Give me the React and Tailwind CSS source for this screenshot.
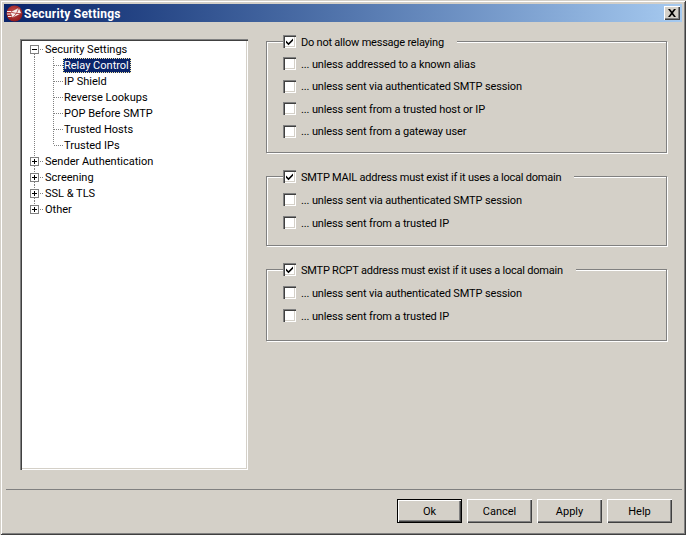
import React from 'react';

const FONT = "font-['Roboto',Arial,sans-serif] text-[11px] leading-[16px]";

const AppIcon = () => (
  <svg width="17" height="17" viewBox="0 0 17 17" className="shrink-0">
    <defs>
      <radialGradient id="red" cx="0.45" cy="0.4" r="0.65">
        <stop offset="0" stopColor="#c9504f" />
        <stop offset="1" stopColor="#8c1517" />
      </radialGradient>
    </defs>
    <circle cx="8.5" cy="8.5" r="8" fill="url(#red)" />
    <path d="M4 7l9-4.500 2.500 6-9 4.500z" fill="#f8eeec" stroke="#8c1517" strokeWidth="0.5" />
    <path d="M4 7l6.500 1.500L13 2.500M6.500 13l4-4.500 5 0" fill="none" stroke="#a62a2a" strokeWidth="0.8" />
    <path d="M1 6.500h4M1 9h3.500M2 11.500h3.500" stroke="#f8eeec" strokeWidth="1" />
  </svg>
);

const CloseButton = () => (
  <button className="flex h-[14px] w-[16px] items-center justify-center bg-[#d4d0c8] shadow-[inset_1px_1px_0_#fff,inset_-1px_-1px_0_#404040,inset_-2px_-2px_0_#808080]">
    <svg width="10" height="8" viewBox="0 0 10 8">
      <path d="M1 0h2l2 2.5L7 0h2L6 4l3 4H7L5 5.5 3 8H1l3-4z" fill="#000" />
    </svg>
  </button>
);

const Dots = ({ x1, y1, x2, y2 }) => (
  <line x1={x1} y1={y1} x2={x2} y2={y2} stroke="#808080" strokeDasharray="1 1" shapeRendering="crispEdges" />
);

// expander plus the dotted guide going through it
const TopGlyph = ({ open, first, last }) => (
  <svg width="23" height="16" className="shrink-0">
    {!first && <Dots x1={12.5} y1={0} x2={12.5} y2={4} />}
    {!last && <Dots x1={12.5} y1={13} x2={12.5} y2={16} />}
    <Dots x1={18} y1={8.5} x2={22} y2={8.5} />
    <rect x="8.5" y="4.5" width="8" height="8" fill="#fff" stroke="#808080" shapeRendering="crispEdges" />
    <path d={open ? 'M10 8.5h5' : 'M10 8.5h5M12.5 6v5'} stroke="#000" shapeRendering="crispEdges" />
  </svg>
);

const ChildGlyph = ({ last }) => (
  <svg width="41" height="16" className="shrink-0">
    <Dots x1={12.5} y1={0} x2={12.5} y2={16} />
    <Dots x1={31.5} y1={0} x2={31.5} y2={last ? 8 : 16} />
    <Dots x1={32} y1={8.5} x2={41} y2={8.5} />
  </svg>
);

const TopRow = ({ label, open, first, last }) => (
  <div className="flex h-4 items-center">
    <TopGlyph open={open} first={first} last={last} />
    <span className="pt-px">{label}</span>
  </div>
);

const ChildRow = ({ label, selected, last }) => (
  <div className="flex h-4 items-center">
    <ChildGlyph last={last} />
    <span
      className={
        selected
          ? 'flex h-[15px] items-center border border-dotted border-[#f5e9a8] bg-[#0a246a] pr-[1px] pt-px text-white'
          : 'pl-[1px] pt-px'
      }
    >
      {label}
    </span>
  </div>
);

const Tree = () => (
  <div className="h-[431px] w-[228px] shrink-0 bg-white pt-[2px] shadow-[inset_1px_1px_0_#808080,inset_2px_2px_0_#404040,inset_-1px_-1px_0_#fff,inset_-2px_-2px_0_#d4d0c8]">
    <div className="pl-[2px]">
      <TopRow label="Security Settings" open first />
      <ChildRow label="Relay Control" selected />
      <ChildRow label="IP Shield" />
      <ChildRow label="Reverse Lookups" />
      <ChildRow label="POP Before SMTP" />
      <ChildRow label="Trusted Hosts" />
      <ChildRow label="Trusted IPs" last />
      <TopRow label="Sender Authentication" />
      <TopRow label="Screening" />
      <TopRow label="SSL & TLS" />
      <TopRow label="Other" last />
    </div>
  </div>
);

const Check = ({ label, checked }) => (
  <label className="flex h-[13px] items-center gap-[5px]">
    <span className="flex h-[13px] w-[13px] shrink-0 items-center justify-center bg-white shadow-[inset_1px_1px_0_#808080,inset_2px_2px_0_#404040,inset_-1px_-1px_0_#fff,inset_-2px_-2px_0_#d4d0c8]">
      {checked && (
        <svg width="9" height="9" viewBox="0 0 9 9">
          <path d="M1 3.500l2.500 2.500L8 1.500v2.200L3.500 8.200 1 5.700z" fill="#000" />
        </svg>
      )}
    </span>
    <span className={`whitespace-nowrap pt-[2px] ${checked ? 'tracking-[-0.22px]' : 'tracking-[-0.13px]'}`}>{label}</span>
  </label>
);

const Group = ({ title, items, rowGap, height }) => (
  <fieldset className={`w-[401px] border border-[#808080] pl-[16px] shadow-[1px_1px_0_#fff,inset_1px_1px_0_#fff] ${height}`}>
    <legend className="bg-[#d4d0c8] pr-[13px]">
      <Check label={title} checked />
    </legend>
    <div className={`flex flex-col ${rowGap}`}>
      {items.map((item) => (
        <Check key={item} label={item} />
      ))}
    </div>
  </fieldset>
);

const DialogButton = ({ label, primary }) => (
  <button
    className={
      primary
        ? 'h-6 w-[65px] bg-[#d4d0c8] pt-px shadow-[inset_0_0_0_1px_#000,inset_2px_2px_0_#fff,inset_-2px_-2px_0_#404040,inset_-3px_-3px_0_#808080]'
        : 'h-6 w-[65px] bg-[#d4d0c8] pt-px shadow-[inset_1px_1px_0_#fff,inset_-1px_-1px_0_#404040,inset_-2px_-2px_0_#808080]'
    }
  >
    {label}
  </button>
);

export default function App() {
  return (
    <div
      className={`flex h-[535px] w-[686px] flex-col overflow-hidden bg-[#d4d0c8] p-[4px] pb-[2px] text-black shadow-[inset_1px_1px_0_#d4d0c8,inset_-1px_-1px_0_#404040,inset_2px_2px_0_#fff,inset_-2px_-2px_0_#808080] ${FONT}`}
    >
      <div className="flex h-[18px] items-center justify-between bg-gradient-to-r from-[#0a246a] to-[#a6caf0] pl-[2px] pr-[2px]">
        <div className="flex items-center gap-[1px]">
          <AppIcon />
          <span className="pt-px text-[12px] font-bold tracking-[0.25px] text-white">Security Settings</span>
        </div>
        <CloseButton />
      </div>

      <div className="flex h-[467px] gap-[18px] pl-[16px] pt-[13px]">
        <div className="pt-[4px]">
          <Tree />
        </div>
        <div className="flex flex-col gap-[17px]">
          <Group
            title="Do not allow message relaying"
            rowGap="gap-[9.67px] pt-[9px]"
            height="h-[118px]"
            items={[
              '... unless addressed to a known alias',
              '... unless sent via authenticated SMTP session',
              '... unless sent from a trusted host or IP',
              '... unless sent from a gateway user',
            ]}
          />
          <Group
            title="SMTP MAIL address must exist if it uses a local domain"
            rowGap="gap-[10px] pt-[10px]"
            height="h-[76px]"
            items={['... unless sent via authenticated SMTP session', '... unless sent from a trusted IP']}
          />
          <Group
            title="SMTP RCPT address must exist if it uses a local domain"
            rowGap="gap-[10px] pt-[10px]"
            height="h-[78px]"
            items={['... unless sent via authenticated SMTP session', '... unless sent from a trusted IP']}
          />
        </div>
      </div>

      <div className="ml-[2px] h-[2px] border-t border-[#808080] shadow-[-2px_-1px_0_-1px_#fff]" />

      <div className="flex justify-end gap-[5px] pr-[10px] pt-[8px]">
        <DialogButton label="Ok" primary />
        <DialogButton label="Cancel" />
        <DialogButton label="Apply" />
        <DialogButton label="Help" />
      </div>
    </div>
  );
}
